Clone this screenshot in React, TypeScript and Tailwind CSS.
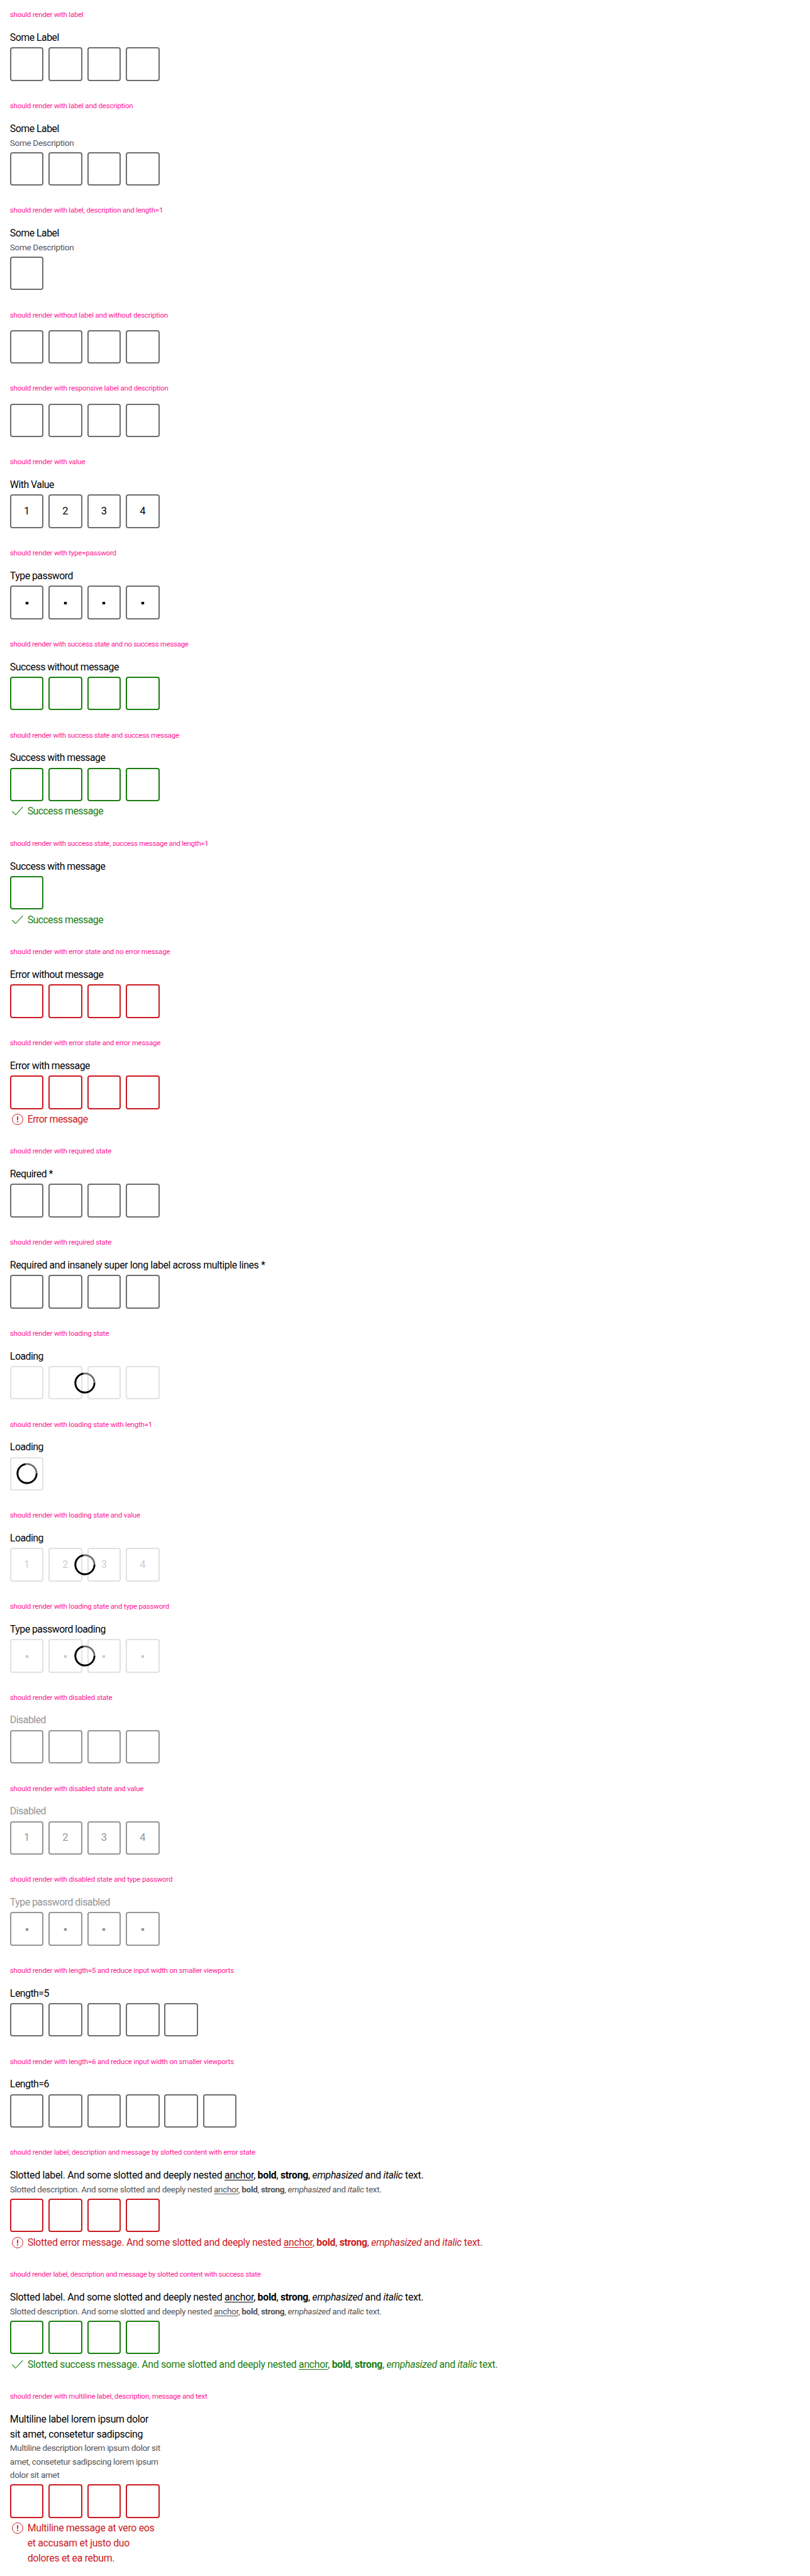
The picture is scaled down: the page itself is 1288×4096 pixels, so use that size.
import type { ReactNode } from "react";

type State = "none" | "success" | "error" | "loading" | "disabled";

type PinCodeProps = {
  label?: ReactNode;
  description?: ReactNode;
  message?: ReactNode;
  state?: State;
  length?: number;
  value?: string;
  password?: boolean;
};

const boxColor: Record<State, string> = {
  none: "border-[#6b6d70] text-[#010205]",
  success: "border-[#197e10] text-[#010205]",
  error: "border-[#cc1922] text-[#010205]",
  loading: "border-[#6b6d70] text-[#010205] opacity-20",
  disabled: "border-[#949598] text-[#949598]",
};

function tracking(text: ReactNode) {
  if (typeof text !== "string") return "tracking-[-0.29px]";
  return text.length < 30 ? "tracking-[-0.5px]" : "tracking-[-0.39px]";
}

function Spinner() {
  return (
    <svg
      viewBox="0 0 48 48"
      className="absolute top-1/2 left-1/2 size-[47.6px] -translate-x-1/2 -translate-y-1/2"
      fill="none"
      strokeWidth="2.8"
    >
      <circle cx="24" cy="24" r="15.3" stroke="#6b6d70" />
      <path d="M39.3 24A15.3 15.3 0 1 1 21.4 8.92" stroke="#010205" />
    </svg>
  );
}

function CheckIcon() {
  return (
    <svg viewBox="0 0 24 24" className="size-[23.8px] shrink-0" fill="none" stroke="#197e10" strokeWidth="1.1">
      <path d="M3.4 12.1 8.8 17.7 20.5 5.2" />
    </svg>
  );
}

function ErrorIcon() {
  return (
    <svg viewBox="0 0 24 24" className="size-[23.8px] shrink-0" fill="none" stroke="#cc1922">
      <circle cx="12" cy="12" r="8.5" strokeWidth="1" />
      <path d="M12 7.3V13.2M12 14.7V16.6" strokeWidth="1.8" />
    </svg>
  );
}

function MaskDot() {
  return (
    <svg viewBox="0 0 6 6" className="mt-[2px] size-[6px]" fill="currentColor">
      <rect x="0.8" y="0.9" width="4.4" height="4.2" rx="0.4" />
    </svg>
  );
}

function PinCode({
  label,
  description,
  message,
  state = "none",
  length = 4,
  value = "",
  password = false,
}: PinCodeProps) {
  return (
    <div>
      {label && (
        <div
          className={`text-[15.85px] leading-[23.8px] ${tracking(label)} ${
            state === "disabled" ? "text-[#949598]" : "text-[#010205]"
          }`}
        >
          {label}
        </div>
      )}
      {description && (
        <div className="text-[13.5px] leading-[21.5px] tracking-[-0.31px] text-[#535457]">{description}</div>
      )}
      <div className={`relative flex w-fit gap-[7.9px] ${label ? "mt-[3.5px]" : "-mt-[0.5px]"}`}>
        {Array.from({ length }, (_, i) => (
          <div
            key={i}
            className={`flex size-[53.5px] items-center justify-center rounded-[4px] border-2 text-[16.5px] ${boxColor[state]}`}
          >
            {password ? <MaskDot /> : value[i]}
          </div>
        ))}
        {state === "loading" && <Spinner />}
      </div>
      {message && (
        <div
          className={`mt-[4.4px] -mb-[0.5px] flex gap-[4px] text-[15.85px] leading-[23.8px] ${tracking(message)} ${
            state === "error" ? "text-[#cc1922]" : "text-[#197e10]"
          }`}
        >
          {state === "error" ? <ErrorIcon /> : <CheckIcon />}
          <div>{message}</div>
        </div>
      )}
    </div>
  );
}

function Slotted({ kind }: { kind: string }) {
  return (
    <>
      Slotted {kind}. And some slotted and deeply nested{" "}
      <a className="underline underline-offset-2">anchor</a>, <b className="font-bold">bold</b>,{" "}
      <strong className="font-bold">strong</strong>, <em>emphasized</em> and <i>italic</i> text.
    </>
  );
}

const cases: (PinCodeProps & { title: string })[] = [
  { title: "should render with label", label: "Some Label" },
  { title: "should render with label and description", label: "Some Label", description: "Some Description" },
  {
    title: "should render with label, description and length=1",
    label: "Some Label",
    description: "Some Description",
    length: 1,
  },
  { title: "should render without label and without description" },
  { title: "should render with responsive label and description" },
  { title: "should render with value", label: "With Value", value: "1234" },
  { title: "should render with type=password", label: "Type password", password: true },
  {
    title: "should render with success state and no success message",
    label: "Success without message",
    state: "success",
  },
  {
    title: "should render with success state and success message",
    label: "Success with message",
    state: "success",
    message: "Success message",
  },
  {
    title: "should render with success state, success message and length=1",
    label: "Success with message",
    state: "success",
    message: "Success message",
    length: 1,
  },
  {
    title: "should render with error state and no error message",
    label: "Error without message",
    state: "error",
  },
  {
    title: "should render with error state and error message",
    label: "Error with message",
    state: "error",
    message: "Error message",
  },
  { title: "should render with required state", label: "Required *" },
  {
    title: "should render with required state",
    label: "Required and insanely super long label across multiple lines *",
  },
  { title: "should render with loading state", label: "Loading", state: "loading" },
  { title: "should render with loading state with length=1", label: "Loading", state: "loading", length: 1 },
  { title: "should render with loading state and value", label: "Loading", state: "loading", value: "1234" },
  {
    title: "should render with loading state and type password",
    label: "Type password loading",
    state: "loading",
    password: true,
  },
  { title: "should render with disabled state", label: "Disabled", state: "disabled" },
  { title: "should render with disabled state and value", label: "Disabled", state: "disabled", value: "1234" },
  {
    title: "should render with disabled state and type password",
    label: "Type password disabled",
    state: "disabled",
    password: true,
  },
  {
    title: "should render with length=5 and reduce input width on smaller viewports",
    label: "Length=5",
    length: 5,
  },
  {
    title: "should render with length=6 and reduce input width on smaller viewports",
    label: "Length=6",
    length: 6,
  },
  {
    title: "should render label, description and message by slotted content with error state",
    label: <Slotted kind="label" />,
    description: <Slotted kind="description" />,
    message: <Slotted kind="error message" />,
    state: "error",
  },
  {
    title: "should render label, description and message by slotted content with success state",
    label: <Slotted kind="label" />,
    description: <Slotted kind="description" />,
    message: <Slotted kind="success message" />,
    state: "success",
  },
  {
    title: "should render with multiline label, description, message and text",
    label: (
      <>
        Multiline label lorem ipsum dolor
        <br />
        sit amet, consetetur sadipscing
      </>
    ),
    description: (
      <>
        Multiline description lorem ipsum dolor sit
        <br />
        amet, consetetur sadipscing lorem ipsum
        <br />
        dolor sit amet
      </>
    ),
    message: (
      <>
        Multiline message at vero eos
        <br />
        et accusam et justo duo
        <br />
        dolores et ea rebum.
      </>
    ),
    state: "error",
  },
];

export default function App() {
  return (
    <main className="h-[4096px] w-full overflow-hidden bg-white px-[15.85px] font-['Roboto',sans-serif] whitespace-nowrap">
      {cases.map((c, i) => (
        <section key={i} className="pt-[16.4px] pb-[15.85px]">
          <h2
            className={`mb-[15.85px] text-[11.5px] leading-[15.85px] text-[#ff1493] ${
              c.title.includes("success") ? "tracking-[-0.31px]" : "tracking-[-0.2px]"
            }`}
          >
            {c.title}
          </h2>
          <PinCode {...c} />
        </section>
      ))}
    </main>
  );
}
